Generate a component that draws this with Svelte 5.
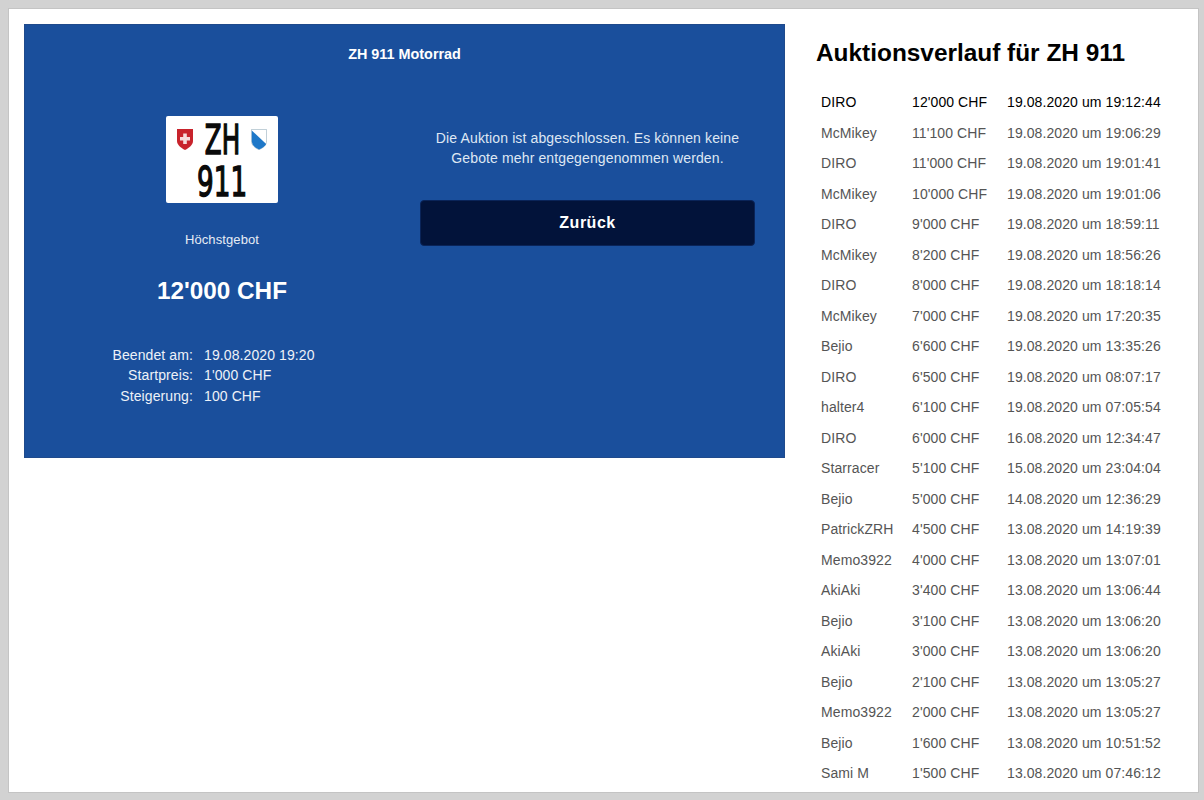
<script>
	let bids = [
		['DIRO', "12'000 CHF", '19.08.2020 um 19:12:44'],
		['McMikey', "11'100 CHF", '19.08.2020 um 19:06:29'],
		['DIRO', "11'000 CHF", '19.08.2020 um 19:01:41'],
		['McMikey', "10'000 CHF", '19.08.2020 um 19:01:06'],
		['DIRO', "9'000 CHF", '19.08.2020 um 18:59:11'],
		['McMikey', "8'200 CHF", '19.08.2020 um 18:56:26'],
		['DIRO', "8'000 CHF", '19.08.2020 um 18:18:14'],
		['McMikey', "7'000 CHF", '19.08.2020 um 17:20:35'],
		['Bejio', "6'600 CHF", '19.08.2020 um 13:35:26'],
		['DIRO', "6'500 CHF", '19.08.2020 um 08:07:17'],
		['halter4', "6'100 CHF", '19.08.2020 um 07:05:54'],
		['DIRO', "6'000 CHF", '16.08.2020 um 12:34:47'],
		['Starracer', "5'100 CHF", '15.08.2020 um 23:04:04'],
		['Bejio', "5'000 CHF", '14.08.2020 um 12:36:29'],
		['PatrickZRH', "4'500 CHF", '13.08.2020 um 14:19:39'],
		['Memo3922', "4'000 CHF", '13.08.2020 um 13:07:01'],
		['AkiAki', "3'400 CHF", '13.08.2020 um 13:06:44'],
		['Bejio', "3'100 CHF", '13.08.2020 um 13:06:20'],
		['AkiAki', "3'000 CHF", '13.08.2020 um 13:06:20'],
		['Bejio', "2'100 CHF", '13.08.2020 um 13:05:27'],
		['Memo3922', "2'000 CHF", '13.08.2020 um 13:05:27'],
		['Bejio', "1'600 CHF", '13.08.2020 um 10:51:52'],
		['Sami M', "1'500 CHF", '13.08.2020 um 07:46:12']
	];
</script>

<div class="frame">
	<div class="page">
		<section class="panel">
			<h2>ZH 911 Motorrad</h2>
			<div class="cols">
				<div class="summary">
					<div class="plate">
						<div class="plate-top">
							<svg class="shield" viewBox="0 0 16 21">
								<path d="M0 0H16V12C16 16 12 19 8 21C4 19 0 16 0 12Z" fill="#c8232c" />
								<path d="M6.2 4.5H9.8V8H13V11.500H9.8V15H6.2V11.500H3V8H6.2Z" fill="#f6dcdc" />
							</svg>
							<span class="plate-text zh">ZH</span>
							<svg class="shield" viewBox="0 0 16 21">
								<path d="M0.4 0.4H15.6V12C15.6 16 12 19 8 20.600C4 19 0.4 16 0.4 12Z" fill="#fff" stroke="#a8bcc8" stroke-width="0.8" />
								<path d="M0.8 1.500L15.200 15C14 17.500 11 19.300 8 20.400C4 18.800 0.800 16 0.800 12Z" fill="#1f78c8" />
							</svg>
						</div>
						<div class="plate-bottom"><span class="plate-text">911</span></div>
					</div>
					<div class="label">Höchstgebot</div>
					<div class="price">12'000 CHF</div>
					<div class="facts">
						<span class="key">Beendet am:</span><span>19.08.2020 19:20</span>
						<span class="key">Startpreis:</span><span>1'000 CHF</span>
						<span class="key">Steigerung:</span><span>100 CHF</span>
					</div>
				</div>
				<div class="closed">
					<p>Die Auktion ist abgeschlossen. Es können keine Gebote mehr entgegengenommen werden.</p>
					<button>Zurück</button>
				</div>
			</div>
		</section>

		<aside class="history">
			<h1>Auktionsverlauf für ZH 911</h1>
			<div class="rows">
				{#each bids as bid, i}
					<div class="row" class:top={i === 0}>
						<span>{bid[0]}</span>
						<span>{bid[1]}</span>
						<span>{bid[2]}</span>
					</div>
				{/each}
			</div>
		</aside>
	</div>
</div>

<style>
	:global(body) {
		margin: 0;
		background: #fff;
	}

	.frame {
		box-sizing: border-box;
		width: 1204px;
		height: 800px;
		overflow: hidden;
		border: solid #d2d2d2;
		border-width: 8px 5px 7px 8px;
		background: #fff;
		font-family: "Liberation Sans", Arial, sans-serif;
	}

	.page {
		display: flex;
		align-items: flex-start;
		gap: 31px;
		box-sizing: border-box;
		height: 100%;
		padding: 16px 0 0 16px;
		box-shadow: inset 0 0 0 1px #c4c4c4;
	}

	.panel {
		flex: none;
		box-sizing: border-box;
		width: 761px;
		height: 434px;
		background: #1a4f9c;
		box-shadow: inset 0 0 0 1px #1f4a8c;
		color: #fff;
		padding-top: 22px;
	}

	h2 {
		margin: 0;
		font-size: 14.4px;
		line-height: 16px;
		font-weight: bold;
		text-align: center;
	}

	.cols {
		display: flex;
		margin-top: 54px;
	}

	.summary {
		width: 396px;
		display: flex;
		flex-direction: column;
		align-items: center;
	}

	.plate {
		box-sizing: border-box;
		width: 112px;
		height: 87px;
		background: #fff;
		border-radius: 2px;
		color: #0a0a0a;
		font-family: "DejaVu Sans", sans-serif;
		text-align: center;
		padding-top: 3px;
	}

	.plate-top {
		display: flex;
		align-items: center;
		justify-content: space-between;
		padding: 0 11px;
		height: 40px;
	}

	.plate-text {
		display: inline-block;
		font-size: 41px;
		line-height: 40px;
		-webkit-text-stroke: 1.5px #0a0a0a;
		transform: scaleX(0.64);
	}

	.zh {
		margin: 0 -10px;
		padding-top: 1px;
		transform: scaleX(0.6);
	}

	.plate-bottom {
		height: 44px;
		line-height: 44px;
		margin-top: 3px;
	}

	.shield {
		flex: none;
		width: 16px;
		height: 21px;
		margin-top: 1px;
	}

	.label {
		margin-top: 29px;
		font-size: 13px;
		line-height: 16px;
		letter-spacing: 0.1px;
		color: #e6ecf5;
	}

	.price {
		margin-top: 29px;
		font-size: 24.3px;
		line-height: 28px;
		font-weight: bold;
	}

	.facts {
		align-self: flex-start;
		display: grid;
		grid-template-columns: 169px auto;
		column-gap: 11px;
		margin-top: 40px;
		font-size: 14px;
		line-height: 20.4px;
		letter-spacing: 0.1px;
		color: #eef2f8;
	}

	.key {
		text-align: right;
	}

	.closed {
		box-sizing: border-box;
		width: 335px;
		text-align: center;
	}

	.closed p {
		margin: 12px 0 32px;
		padding: 0 14px;
		font-size: 14px;
		line-height: 20px;
		letter-spacing: 0.13px;
		color: #dfe7f3;
	}

	button {
		display: block;
		width: 100%;
		height: 46px;
		padding-top: 1px;
		border: 1px solid #0a2458;
		border-radius: 4px;
		background: #02133a;
		color: #fff;
		font-family: inherit;
		font-size: 16px;
		font-weight: bold;
		letter-spacing: 0.5px;
	}

	.history {
		flex: 1;
	}

	h1 {
		margin: 13px 0 0;
		font-size: 24.4px;
		line-height: 32px;
		font-weight: bold;
		color: #000;
	}

	.rows {
		margin-top: 18px;
		padding-left: 5px;
	}

	.row {
		display: grid;
		grid-template-columns: 91px 95px auto;
		height: 30.5px;
		line-height: 30.5px;
		font-size: 14px;
		letter-spacing: 0.09px;
		color: #555;
		white-space: nowrap;
	}

	.row.top {
		color: #000;
	}
</style>
